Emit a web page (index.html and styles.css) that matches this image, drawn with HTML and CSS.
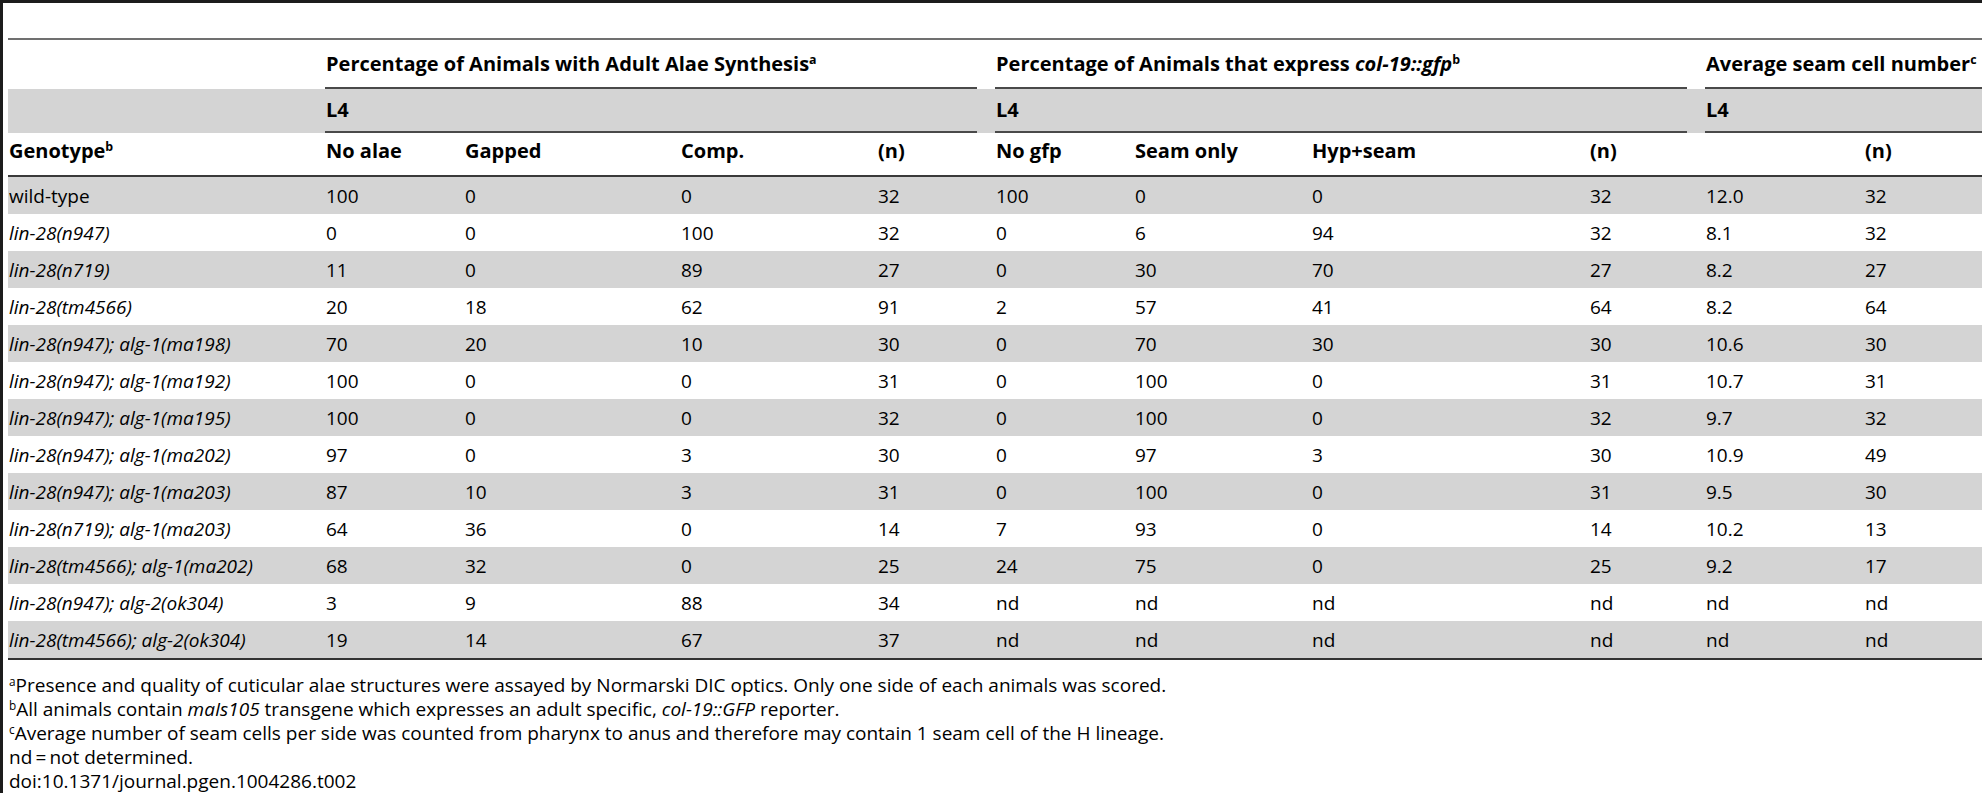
FILE: index.html
```html
<!DOCTYPE html>
<html lang="en">
<head>
<meta charset="utf-8">
<title>Table 2</title>
<link rel="stylesheet" href="styles.css">
</head>
<body>
<div class="frame">
  <div class="tbl">
    <div class="row hrow1">
      <div class="cell c-geno"></div>
      <div class="cell grp g1">Percentage of Animals with Adult Alae Synthesis<span class="sup">a</span></div>
      <div class="cell grp g2">Percentage of Animals that express <i>col-19::gfp</i><span class="sup">b</span></div>
      <div class="cell grp g3">Average seam cell number<span class="sup">c</span></div>
    </div>
    <div class="row hrow2 shade">
      <div class="cell c-geno"></div>
      <div class="cell grp g1">L4</div>
      <div class="cell grp g2">L4</div>
      <div class="cell grp g3">L4</div>
    </div>
    <div class="row hrow3">
      <div class="cell">Genotype<span class="sup">b</span></div>
      <div class="cell">No alae</div>
      <div class="cell">Gapped</div>
      <div class="cell">Comp.</div>
      <div class="cell">(n)</div>
      <div class="cell">No gfp</div>
      <div class="cell">Seam only</div>
      <div class="cell">Hyp+seam</div>
      <div class="cell">(n)</div>
      <div class="cell"></div>
      <div class="cell">(n)</div>
    </div>

    <div class="row drow shade">
      <div class="cell">wild-type</div>
      <div class="cell">100</div><div class="cell">0</div><div class="cell">0</div><div class="cell">32</div>
      <div class="cell">100</div><div class="cell">0</div><div class="cell">0</div><div class="cell">32</div>
      <div class="cell">12.0</div><div class="cell">32</div>
    </div>
    <div class="row drow">
      <div class="cell gen">lin-28(n947)</div>
      <div class="cell">0</div><div class="cell">0</div><div class="cell">100</div><div class="cell">32</div>
      <div class="cell">0</div><div class="cell">6</div><div class="cell">94</div><div class="cell">32</div>
      <div class="cell">8.1</div><div class="cell">32</div>
    </div>
    <div class="row drow shade">
      <div class="cell gen">lin-28(n719)</div>
      <div class="cell">11</div><div class="cell">0</div><div class="cell">89</div><div class="cell">27</div>
      <div class="cell">0</div><div class="cell">30</div><div class="cell">70</div><div class="cell">27</div>
      <div class="cell">8.2</div><div class="cell">27</div>
    </div>
    <div class="row drow">
      <div class="cell gen">lin-28(tm4566)</div>
      <div class="cell">20</div><div class="cell">18</div><div class="cell">62</div><div class="cell">91</div>
      <div class="cell">2</div><div class="cell">57</div><div class="cell">41</div><div class="cell">64</div>
      <div class="cell">8.2</div><div class="cell">64</div>
    </div>
    <div class="row drow shade">
      <div class="cell gen">lin-28(n947); alg-1(ma198)</div>
      <div class="cell">70</div><div class="cell">20</div><div class="cell">10</div><div class="cell">30</div>
      <div class="cell">0</div><div class="cell">70</div><div class="cell">30</div><div class="cell">30</div>
      <div class="cell">10.6</div><div class="cell">30</div>
    </div>
    <div class="row drow">
      <div class="cell gen">lin-28(n947); alg-1(ma192)</div>
      <div class="cell">100</div><div class="cell">0</div><div class="cell">0</div><div class="cell">31</div>
      <div class="cell">0</div><div class="cell">100</div><div class="cell">0</div><div class="cell">31</div>
      <div class="cell">10.7</div><div class="cell">31</div>
    </div>
    <div class="row drow shade">
      <div class="cell gen">lin-28(n947); alg-1(ma195)</div>
      <div class="cell">100</div><div class="cell">0</div><div class="cell">0</div><div class="cell">32</div>
      <div class="cell">0</div><div class="cell">100</div><div class="cell">0</div><div class="cell">32</div>
      <div class="cell">9.7</div><div class="cell">32</div>
    </div>
    <div class="row drow">
      <div class="cell gen">lin-28(n947); alg-1(ma202)</div>
      <div class="cell">97</div><div class="cell">0</div><div class="cell">3</div><div class="cell">30</div>
      <div class="cell">0</div><div class="cell">97</div><div class="cell">3</div><div class="cell">30</div>
      <div class="cell">10.9</div><div class="cell">49</div>
    </div>
    <div class="row drow shade">
      <div class="cell gen">lin-28(n947); alg-1(ma203)</div>
      <div class="cell">87</div><div class="cell">10</div><div class="cell">3</div><div class="cell">31</div>
      <div class="cell">0</div><div class="cell">100</div><div class="cell">0</div><div class="cell">31</div>
      <div class="cell">9.5</div><div class="cell">30</div>
    </div>
    <div class="row drow">
      <div class="cell gen">lin-28(n719); alg-1(ma203)</div>
      <div class="cell">64</div><div class="cell">36</div><div class="cell">0</div><div class="cell">14</div>
      <div class="cell">7</div><div class="cell">93</div><div class="cell">0</div><div class="cell">14</div>
      <div class="cell">10.2</div><div class="cell">13</div>
    </div>
    <div class="row drow shade">
      <div class="cell gen">lin-28(tm4566); alg-1(ma202)</div>
      <div class="cell">68</div><div class="cell">32</div><div class="cell">0</div><div class="cell">25</div>
      <div class="cell">24</div><div class="cell">75</div><div class="cell">0</div><div class="cell">25</div>
      <div class="cell">9.2</div><div class="cell">17</div>
    </div>
    <div class="row drow">
      <div class="cell gen">lin-28(n947); alg-2(ok304)</div>
      <div class="cell">3</div><div class="cell">9</div><div class="cell">88</div><div class="cell">34</div>
      <div class="cell">nd</div><div class="cell">nd</div><div class="cell">nd</div><div class="cell">nd</div>
      <div class="cell">nd</div><div class="cell">nd</div>
    </div>
    <div class="row drow shade last">
      <div class="cell gen">lin-28(tm4566); alg-2(ok304)</div>
      <div class="cell">19</div><div class="cell">14</div><div class="cell">67</div><div class="cell">37</div>
      <div class="cell">nd</div><div class="cell">nd</div><div class="cell">nd</div><div class="cell">nd</div>
      <div class="cell">nd</div><div class="cell">nd</div>
    </div>
  </div>

  <div class="notes">
    <p><span class="sup">a</span>Presence and quality of cuticular alae structures were assayed by Normarski DIC optics. Only one side of each animals was scored.</p>
    <p><span class="sup">b</span>All animals contain <i>maIs105</i> transgene which expresses an adult specific, <i>col-19::GFP</i> reporter.</p>
    <p><span class="sup">c</span>Average number of seam cells per side was counted from pharynx to anus and therefore may contain 1 seam cell of the H lineage.</p>
    <p>nd&#8201;=&#8201;not determined.</p>
    <p>doi:10.1371/journal.pgen.1004286.t002</p>
  </div>
</div>
</body>
</html>
```

FILE: styles.css
```css
html, body {
  margin: 0;
  padding: 0;
  background: #fff;
  overflow: hidden;
}

body {
  font-family: "Open Sans", "Liberation Sans", sans-serif;
  font-size: 19px;
  color: #000;
}

.frame {
  border-top: 3px solid #1c1c1c;
  border-left: 3px solid #1c1c1c;
  height: 790px;
  padding-left: 5px;
}

.tbl {
  margin-top: 35px;
  width: 2100px;
}

.row {
  display: grid;
  grid-template-columns: 299px 121px 198px 179px 100px 121px 159px 260px 98px 141px 200px;
  column-gap: 18px;
}

.cell {
  padding-left: 1px;
  white-space: nowrap;
}

.shade {
  background: #d4d4d4;
}

.g1 { grid-column: 2 / 6; }
.g2 { grid-column: 6 / 10; }
.g3 { grid-column: 10 / 12; }

.hrow1 {
  border-top: 2px solid #707070;
  height: 49px;
  font-weight: 700;
  font-size: 20px;
}

.hrow1 .cell {
  padding-top: 12px;
  line-height: 24px;
}

.hrow1 .grp {
  border-bottom: 2px solid #4a4a4a;
}

.hrow2 {
  height: 44px;
  font-weight: 700;
  font-size: 20px;
}

.hrow2 .cell {
  padding-top: 9px;
  line-height: 24px;
}

.hrow2 .grp {
  border-bottom: 2px solid #4a4a4a;
}

.hrow3 {
  height: 42px;
  border-bottom: 2px solid #3a3a3a;
  font-weight: 700;
  font-size: 20px;
}

.hrow3 .cell {
  padding-top: 6px;
  line-height: 24px;
}

.drow {
  height: 37px;
  align-items: center;
}

.drow.last {
  border-bottom: 2px solid #333;
}

.gen {
  font-style: italic;
}

.sup {
  font-size: 0.62em;
  vertical-align: 0.55em;
  line-height: 0;
}

.notes {
  margin-top: 13px;
  padding-left: 1px;
}

.notes p {
  margin: 0;
  line-height: 24px;
  white-space: nowrap;
}
```
